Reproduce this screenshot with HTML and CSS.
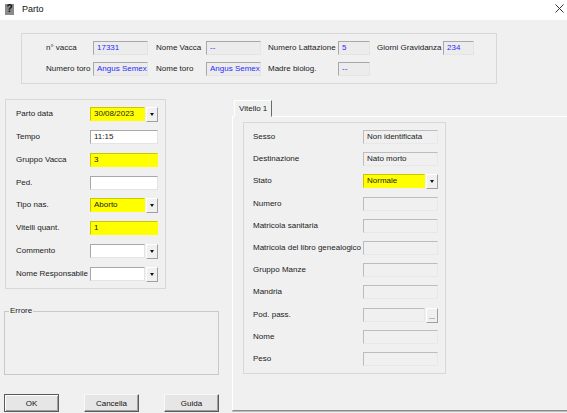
FILE: index.html
```html
<!DOCTYPE html>
<html>
<head>
<meta charset="utf-8">
<link rel="stylesheet" href="styles.css">
</head>
<body>
<div class="titlebar">
  <span class="app-icon"><span class="q">?</span></span>
  <span class="title">Parto</span>
  <svg class="close" width="9" height="9" viewBox="0 0 9 9"><path d="M0.5 0.5 L8.5 8.5 M8.5 0.5 L0.5 8.5" stroke="#333" stroke-width="1"/></svg>
</div>

<div class="header-box">
  <span class="lbl">n° vacca</span><span class="ro blue w55">17331</span>
  <span class="lbl">Nome Vacca</span><span class="ro blue w55">--</span>
  <span class="lbl">Numero Lattazione</span><span class="ro blue w32">5</span>
  <span class="lbl">Giorni Gravidanza</span><span class="ro blue w31">234</span>
  <span class="lbl">Numero toro</span><span class="ro blue w55">Angus Semex</span>
  <span class="lbl">Nome toro</span><span class="ro blue w55">Angus Semex</span>
  <span class="lbl">Madre biolog.</span><span class="ro blue w32">--</span>
</div>

<div class="main">
  <div class="left-col">
    <div class="form-box">
      <span class="lbl">Parto data</span>
      <span class="combo"><span class="in yellow">30/08/2023</span><span class="dd"><i></i></span></span>
      <span class="lbl">Tempo</span>
      <span class="in white full">11:15</span>
      <span class="lbl">Gruppo Vacca</span>
      <span class="in yellow full">3</span>
      <span class="lbl">Ped.</span>
      <span class="in white full"></span>
      <span class="lbl">Tipo nas.</span>
      <span class="combo"><span class="in yellow">Aborto</span><span class="dd"><i></i></span></span>
      <span class="lbl">Vitelli quant.</span>
      <span class="in yellow full">1</span>
      <span class="lbl">Commento</span>
      <span class="combo"><span class="in white"></span><span class="dd"><i></i></span></span>
      <span class="lbl">Nome Responsabile</span>
      <span class="combo"><span class="in white"></span><span class="dd"><i></i></span></span>
    </div>

    <fieldset class="error-box">
      <legend>Errore</legend>
    </fieldset>

    <div class="buttons">
      <button class="btn default">OK</button>
      <button class="btn">Cancella</button>
      <button class="btn">Guida</button>
    </div>
  </div>

  <div class="right-col">
    <div class="tabs"><span class="tab">Vitello 1</span></div>
    <div class="tab-panel">
      <div class="calf-box">
        <span class="lbl">Sesso</span><span class="ro dis">Non identificata</span>
        <span class="lbl">Destinazione</span><span class="ro dis">Nato morto</span>
        <span class="lbl">Stato</span><span class="combo"><span class="in yellow">Normale</span><span class="dd"><i></i></span></span>
        <span class="lbl">Numero</span><span class="ro dis"></span>
        <span class="lbl">Matricola sanitaria</span><span class="ro dis"></span>
        <span class="lbl">Matricola del libro genealogico</span><span class="ro dis"></span>
        <span class="lbl">Gruppo Manze</span><span class="ro dis"></span>
        <span class="lbl">Mandria</span><span class="ro dis"></span>
        <span class="lbl">Pod. pass.</span><span class="combo"><span class="ro dis"></span><span class="dd dots">...</span></span>
        <span class="lbl">Nome</span><span class="ro dis"></span>
        <span class="lbl">Peso</span><span class="ro dis"></span>
      </div>
    </div>
  </div>
</div>
</body>
</html>
```

FILE: styles.css
```css
* { box-sizing: border-box; }

html, body {
  margin: 0;
  padding: 0;
}

body {
  width: 567px;
  height: 413px;
  overflow: hidden;
  background: #f0f0f0;
  font-family: "Liberation Sans", Arial, sans-serif;
  font-size: 8px;
  color: #1a1a1a;
}

/* Title bar */
.titlebar {
  height: 20px;
  background: #ffffff;
  display: flex;
  align-items: center;
  padding-left: 5px;
}

.app-icon {
  width: 9px;
  height: 11px;
  background: #8a8a8a;
  display: flex;
  align-items: center;
  justify-content: center;
  margin-top: -2px;
}

.app-icon .q {
  color: #111;
  font-size: 10px;
  font-weight: bold;
  line-height: 1;
}

.title {
  margin-left: 8px;
  font-size: 9px;
  color: #111;
  margin-top: -3px;
}

.close {
  margin-left: auto;
  margin-right: 3px;
  margin-top: -3px;
}

/* Shared label / field */
.lbl {
  white-space: nowrap;
  line-height: 14px;
}

.ro, .in {
  height: 14px;
  line-height: 12px;
  padding-left: 3px;
  white-space: nowrap;
  overflow: hidden;
  border-style: solid;
  border-width: 1px;
  border-color: #a8a8a8 #e4e4e4 #e4e4e4 #a8a8a8;
}

.ro {
  background: #ececec;
}

.blue { color: #2b2bff; }

.w55 { width: 55px; }
.w32 { width: 32px; }
.w31 { width: 31px; }

.white { background: #ffffff; }
.yellow { background: #ffff00; border-color: #c8c800 #ffff00 #ffff00 #c8c800; }

.full { width: 68px; }

.combo {
  display: flex;
  height: 15px;
  width: 68px;
}

.combo .in, .combo .ro {
  flex: 1;
}

.dd {
  width: 12px;
  height: 15px;
  margin-left: 1px;
  background: #f0f0f0;
  border: 1px solid;
  border-color: #ffffff #a0a0a0 #a0a0a0 #ffffff;
  display: flex;
  align-items: center;
  justify-content: center;
}

.dd i {
  width: 0;
  height: 0;
  border-left: 2.5px solid transparent;
  border-right: 2.5px solid transparent;
  border-top: 3px solid #111;
}

.dd.dots {
  font-size: 7px;
  line-height: 1;
  color: #222;
  align-items: flex-end;
  padding-bottom: 2px;
}

/* Header group */
.header-box {
  margin: 13px 0 0 21px;
  width: 476px;
  height: 51px;
  border: 1px solid #d8d8d8;
  display: grid;
  grid-template-columns: 71px 63px 50px 62px 70px 39px 66px 31px;
  grid-auto-rows: 14px;
  row-gap: 7px;
  padding-top: 7px;
  align-items: center;
}

.header-box .lbl:first-child,
.header-box .lbl:nth-child(9) {
  padding-left: 24px;
}

/* Main area */
.main {
  display: flex;
  margin-top: 15px;
}

.left-col {
  width: 232px;
  flex: none;
}

.form-box {
  margin-left: 5px;
  width: 161px;
  height: 190px;
  border: 1px solid #d8d8d8;
  padding: 7px 0 0 10px;
  display: grid;
  grid-template-columns: 74px 68px;
  grid-auto-rows: 22.85px;
  align-items: start;
}

.form-box .lbl {
  line-height: 14px;
}

.error-box {
  margin: 17px 0 0 4px;
  width: 215px;
  height: 69px;
  border: 1px solid #c8c8c8;
  border-top-color: #c8c8c8;
  padding: 0;
  min-width: 0;
}

.error-box legend {
  margin-left: 4px;
  padding: 0 1px;
  font-size: 8px;
  line-height: 10px;
}

.buttons {
  display: flex;
  gap: 25px;
  margin: 19px 0 0 4px;
}

.btn {
  width: 55px;
  height: 18px;
  margin: 0;
  padding: 0;
  font-family: "Liberation Sans", Arial, sans-serif;
  font-size: 8px;
  color: #111;
  background: #e6e6e6;
  border: 1px solid;
  border-color: #f8f8f8 #5a5a5a #5a5a5a #f8f8f8;
  box-shadow: inset -1px -1px 0 #a0a0a0;
}

.btn.default {
  border-color: #5a5a5a;
  box-shadow: inset 1px 1px 0 #ffffff, inset -1px -1px 0 #a0a0a0;
}

/* Right side: tab */
.right-col {
  flex: 1;
  display: flex;
  flex-direction: column;
  padding-top: 1px;
}

.tabs {
  display: flex;
  padding-left: 2px;
  height: 16px;
}

.tab {
  width: 38px;
  height: 17px;
  padding-left: 4px;
  line-height: 15px;
  background: #f0f0f0;
  border: 1px solid;
  border-color: #ffffff #6a6a6a transparent #ffffff;
  position: relative;
  z-index: 1;
}

.tab-panel {
  height: 295px;
  border-top: 1px solid #ffffff;
  border-left: 1px solid #ffffff;
  border-bottom: 1px solid #8a8a8a;
  box-shadow: 0 1px 0 #bcbcbc;
  padding: 5px 0 0 10px;
}

.calf-box {
  width: 203px;
  height: 252px;
  border: 1px solid #d8d8d8;
  padding: 7px 0 0 9px;
  display: grid;
  grid-template-columns: 110px 75px;
  grid-auto-rows: 22.2px;
  align-items: start;
}

.calf-box .combo {
  width: 75px;
}

.dis {
  background: #f0f0f0;
  border-color: #bcbcbc #e8e8e8 #e8e8e8 #bcbcbc;
  color: #1a1a1a;
  width: 75px;
}

.combo .dis {
  width: auto;
}
```
